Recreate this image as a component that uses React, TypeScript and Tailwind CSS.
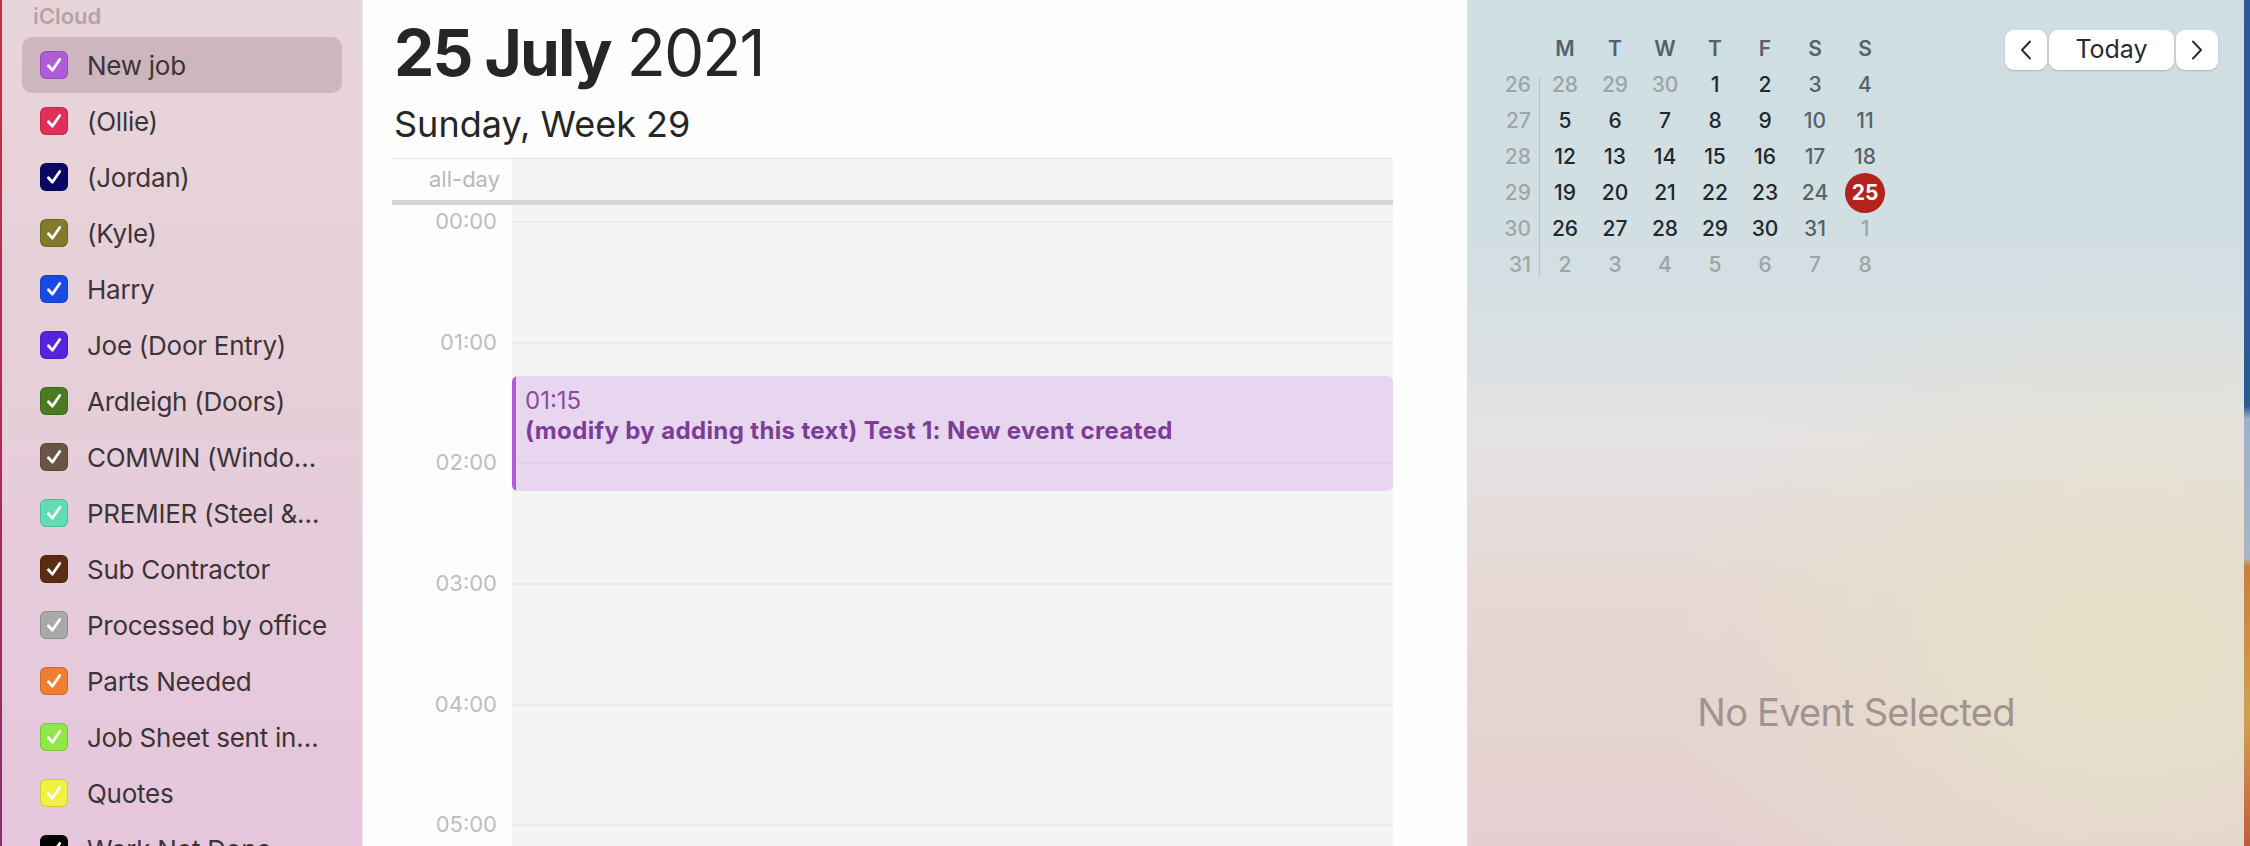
import React from "react";

const calendars: { name: string; color: string; selected?: boolean }[] = [
  { name: "New job", color: "#b05cd6", selected: true },
  { name: "(Ollie)", color: "#e02f58" },
  { name: "(Jordan)", color: "#0a0862" },
  { name: "(Kyle)", color: "#7f7b29" },
  { name: "Harry", color: "#1a4ae6" },
  { name: "Joe (Door Entry)", color: "#5822de" },
  { name: "Ardleigh (Doors)", color: "#4a7a21" },
  { name: "COMWIN (Windo…", color: "#6a5445" },
  { name: "PREMIER (Steel &…", color: "#62dcb2" },
  { name: "Sub Contractor", color: "#5a2c10" },
  { name: "Processed by office", color: "#a9a9a9" },
  { name: "Parts Needed", color: "#ee7f32" },
  { name: "Job Sheet sent in…", color: "#92e748" },
  { name: "Quotes", color: "#f3f044" },
  { name: "Work Not Done", color: "#030303" },
];

function Check({ color }: { color: string }) {
  return (
    <div
      className="w-[28px] h-[28px] rounded-[6px] border border-black/15 flex items-center justify-center shrink-0"
      style={{ backgroundColor: color }}
    >
      <svg width="28" height="28" viewBox="0 0 28 28">
        <path
          d="M8 14.8 L12.2 19.6 L20.2 8"
          fill="none"
          stroke="white"
          strokeWidth="3"
          strokeLinecap="round"
          strokeLinejoin="round"
        />
      </svg>
    </div>
  );
}

type Day = { d: number; kind: "other" | "week" | "weekend" | "today" };

const weeks: { wk: number; days: Day[] }[] = [
  {
    wk: 26,
    days: [
      { d: 28, kind: "other" },
      { d: 29, kind: "other" },
      { d: 30, kind: "other" },
      { d: 1, kind: "week" },
      { d: 2, kind: "week" },
      { d: 3, kind: "weekend" },
      { d: 4, kind: "weekend" },
    ],
  },
  {
    wk: 27,
    days: [
      { d: 5, kind: "week" },
      { d: 6, kind: "week" },
      { d: 7, kind: "week" },
      { d: 8, kind: "week" },
      { d: 9, kind: "week" },
      { d: 10, kind: "weekend" },
      { d: 11, kind: "weekend" },
    ],
  },
  {
    wk: 28,
    days: [
      { d: 12, kind: "week" },
      { d: 13, kind: "week" },
      { d: 14, kind: "week" },
      { d: 15, kind: "week" },
      { d: 16, kind: "week" },
      { d: 17, kind: "weekend" },
      { d: 18, kind: "weekend" },
    ],
  },
  {
    wk: 29,
    days: [
      { d: 19, kind: "week" },
      { d: 20, kind: "week" },
      { d: 21, kind: "week" },
      { d: 22, kind: "week" },
      { d: 23, kind: "week" },
      { d: 24, kind: "weekend" },
      { d: 25, kind: "today" },
    ],
  },
  {
    wk: 30,
    days: [
      { d: 26, kind: "week" },
      { d: 27, kind: "week" },
      { d: 28, kind: "week" },
      { d: 29, kind: "week" },
      { d: 30, kind: "week" },
      { d: 31, kind: "weekend" },
      { d: 1, kind: "other" },
    ],
  },
  {
    wk: 31,
    days: [
      { d: 2, kind: "other" },
      { d: 3, kind: "other" },
      { d: 4, kind: "other" },
      { d: 5, kind: "other" },
      { d: 6, kind: "other" },
      { d: 7, kind: "other" },
      { d: 8, kind: "other" },
    ],
  },
];

const dayColor: Record<string, string> = {
  other: "text-[#9ba4a6]",
  week: "text-[#1e292d]",
  weekend: "text-[#56636a]",
  today: "text-white",
};

function MiniCal() {
  const heads = ["M", "T", "W", "T", "F", "S", "S"];
  return (
    <div className="mt-[31px] flex flex-col">
      <div className="flex h-[36px] items-center">
        <div className="w-[40px]" />
        {heads.map((h, i) => (
          <div
            key={i}
            className="w-[50px] text-center text-[21px] font-semibold text-[#55626a] leading-[36px]"
          >
            {h}
          </div>
        ))}
      </div>
      <div className="flex">
        <div className="w-[39px] flex flex-col">
          {weeks.map((w) => (
            <div
              key={w.wk}
              className="h-[36px] leading-[36px] text-right pr-[8px] text-[21px] font-medium text-[#9ea6a8]"
            >
              {w.wk}
            </div>
          ))}
        </div>
        <div className="w-px bg-[#b7bfc1] mt-[10px] mb-[7px]" />
        <div className="grid grid-cols-7 w-[350px]">
          {weeks.flatMap((w) =>
            w.days.map((day, i) => (
              <div
                key={w.wk + "-" + i}
                className="h-[36px] flex items-center justify-center"
              >
                {day.kind === "today" ? (
                  <div className="w-[40px] h-[40px] rounded-full bg-[#b3231b] flex items-center justify-center text-[21px] font-bold text-white">
                    {day.d}
                  </div>
                ) : (
                  <span className={"text-[21px] font-medium " + dayColor[day.kind]}>
                    {day.d}
                  </span>
                )}
              </div>
            ))
          )}
        </div>
      </div>
    </div>
  );
}

function NavButtons() {
  return (
    <div className="mt-[30px] flex gap-[2px]">
      <div className="w-[42px] h-[40px] rounded-[9px] bg-white shadow-[0_1px_2px_rgba(0,0,0,0.18)] flex items-center justify-center">
        <svg width="14" height="20" viewBox="0 0 14 20">
          <path d="M11 1.5 L3 10 L11 18.5" fill="none" stroke="#2e2e2e" strokeWidth="2" strokeLinecap="round" strokeLinejoin="round" />
        </svg>
      </div>
      <div className="w-[125px] h-[40px] rounded-[9px] bg-white shadow-[0_1px_2px_rgba(0,0,0,0.18)] flex items-center justify-center text-[25px] text-[#2a2a2a]">
        Today
      </div>
      <div className="w-[42px] h-[40px] rounded-[9px] bg-white shadow-[0_1px_2px_rgba(0,0,0,0.18)] flex items-center justify-center">
        <svg width="14" height="20" viewBox="0 0 14 20">
          <path d="M3 1.5 L11 10 L3 18.5" fill="none" stroke="#2e2e2e" strokeWidth="2" strokeLinecap="round" strokeLinejoin="round" />
        </svg>
      </div>
    </div>
  );
}

const hours = ["00:00", "01:00", "02:00", "03:00", "04:00", "05:00", "06:00"];

export default function App() {
  return (
    <div
      className="w-[2250px] h-[846px] flex overflow-hidden"
      style={{ fontFamily: "Inter, 'Noto Sans', 'Liberation Sans', sans-serif" }}
    >
      {/* desktop edge left */}
      <div className="w-[2px] h-full bg-[linear-gradient(180deg,#c8303e_0%,#b02a50_50%,#86306a_100%)]" />

      {/* sidebar */}
      <div className="w-[361px] h-full border-r border-[#efe8eb] bg-[linear-gradient(180deg,#e8d5d9_0%,#e6cfd9_45%,#e6c6dd_100%)] flex flex-col">
        <div className="pl-[31px] mt-[5px] leading-[22px] text-[22px] font-semibold text-[#b4a3aa]">
          iCloud
        </div>
        <div className="mt-[10px] ml-[20px] w-[320px] flex flex-col">
          {calendars.map((c) => (
            <div
              key={c.name}
              className={
                "h-[56px] shrink-0 rounded-[10px] flex items-center pl-[18px] gap-[19px] " +
                (c.selected ? "bg-[#cdb6be]" : "")
              }
            >
              <Check color={c.color} />
              <span className="text-[26px] text-[#3b3538] whitespace-nowrap tracking-[-0.01em]">
                {c.name}
              </span>
            </div>
          ))}
        </div>
      </div>

      {/* main day view */}
      <div className="w-[1105px] h-full bg-[#fdfdfd] border-r border-[#dddddd] pl-[29px] flex flex-col">
        <div className="mt-[21px] ml-[2px] text-[64px] leading-[64px] text-[#262626] tracking-[-0.03em] whitespace-nowrap">
          <span className="font-bold">25 July</span> 2021
        </div>
        <div className="mt-[21px] ml-[2px] text-[36px] leading-[36px] text-[#262626] whitespace-nowrap">
          Sunday, Week 29
        </div>
        <div className="mt-[16px] w-[1001px] flex-1 border-t border-[#e2e2e2] flex flex-col overflow-hidden">
          <div className="h-[41px] flex shrink-0">
            <div className="w-[120px] text-right pr-[12px] text-[22px] leading-[41px] text-[#b8b8b8]">
              all-day
            </div>
            <div className="flex-1 bg-[#f4f4f4]" />
          </div>
          <div className="h-[5px] bg-[#d6d6d6] shrink-0" />
          <div className="flex-1 flex">
            <div className="w-[120px] pt-[16px] flex flex-col">
              {hours.map((h) => (
                <div key={h} className="h-[120.7px] shrink-0 flex flex-col">
                  <div className="-mt-[13px] h-[26px] leading-[26px] text-right pr-[15px] text-[22px] text-[#bdbdbd]">
                    {h}
                  </div>
                </div>
              ))}
            </div>
            <div className="flex-1 bg-[#f4f4f4] relative pt-[16px] flex flex-col">
              {hours.map((h) => (
                <div key={h} className="h-[120.7px] shrink-0 border-t-2 border-[#ebebeb]" />
              ))}
              <div className="absolute left-0 right-0 top-[170.7px] h-[115px] rounded-[6px] overflow-hidden flex bg-[rgba(210,155,230,0.35)]">
                <div className="w-[4px] h-full bg-[#b25ad8]" />
                <div className="pl-[9px] pt-[10px] flex flex-col">
                  <div className="text-[24px] leading-[30px] text-[#8c4a9f]">01:15</div>
                  <div className="text-[24px] leading-[30px] font-bold text-[#7c3e94] whitespace-nowrap tracking-[0.015em]">
                    (modify by adding this text) Test 1: New event created
                  </div>
                </div>
              </div>
            </div>
          </div>
        </div>
      </div>

      {/* right inspector panel */}
      <div className="w-[776px] h-full flex flex-col bg-[radial-gradient(ellipse_60%_45%_at_85%_78%,rgba(230,226,200,0.95)_0%,rgba(230,226,200,0)_100%),linear-gradient(180deg,#cedee3_0%,#d3dfe2_33%,#e5e2e4_52%,#e6d8d3_70%,#e5d0d1_100%)]">
        <div className="flex justify-between pl-[32px] pr-[26px]">
          <MiniCal />
          <NavButtons />
        </div>
        <div className="mt-[409px] text-center text-[38px] leading-[40px] text-[#a3938f] tracking-[-0.02em]">
          No Event Selected
        </div>
      </div>

      {/* desktop edge right */}
      <div className="w-[6px] h-full bg-[linear-gradient(180deg,#2c5a96_0%,#2c5a96_48%,#9fb0c8_49.5%,#aab5c8_66%,#c8803c_67%,#d0a24e_85%,#c46a42_97%,#c05a40_100%)]" />
    </div>
  );
}
